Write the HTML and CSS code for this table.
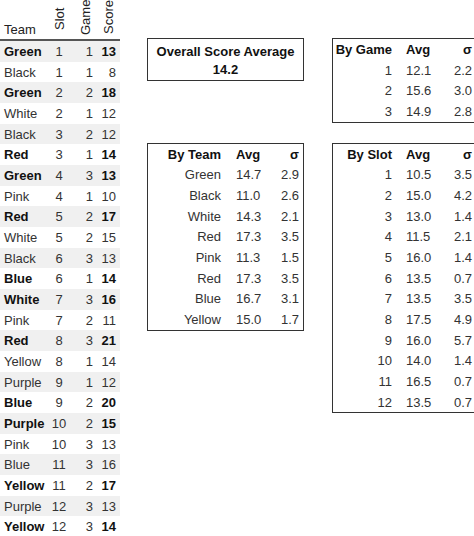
FILE: index.html
```html
<!DOCTYPE html>
<html>
<head>
<meta charset="utf-8">
<link rel="stylesheet" href="styles.css">
</head>
<body>
<div class="page">
  <table class="games">
    <thead>
      <tr>
        <th class="team">Team</th>
        <th class="slot"><span class="vert">Slot</span></th>
        <th class="game"><span class="vert">Game</span></th>
        <th class="score"><span class="vert">Score</span></th>
      </tr>
    </thead>
    <tbody>
      <tr class="win"><td class="team">Green</td><td class="slot">1</td><td class="game">1</td><td class="score">13</td></tr>
      <tr><td class="team">Black</td><td class="slot">1</td><td class="game">1</td><td class="score">8</td></tr>
      <tr class="win"><td class="team">Green</td><td class="slot">2</td><td class="game">2</td><td class="score">18</td></tr>
      <tr><td class="team">White</td><td class="slot">2</td><td class="game">1</td><td class="score">12</td></tr>
      <tr><td class="team">Black</td><td class="slot">3</td><td class="game">2</td><td class="score">12</td></tr>
      <tr class="win"><td class="team">Red</td><td class="slot">3</td><td class="game">1</td><td class="score">14</td></tr>
      <tr class="win"><td class="team">Green</td><td class="slot">4</td><td class="game">3</td><td class="score">13</td></tr>
      <tr><td class="team">Pink</td><td class="slot">4</td><td class="game">1</td><td class="score">10</td></tr>
      <tr class="win"><td class="team">Red</td><td class="slot">5</td><td class="game">2</td><td class="score">17</td></tr>
      <tr><td class="team">White</td><td class="slot">5</td><td class="game">2</td><td class="score">15</td></tr>
      <tr><td class="team">Black</td><td class="slot">6</td><td class="game">3</td><td class="score">13</td></tr>
      <tr class="win"><td class="team">Blue</td><td class="slot">6</td><td class="game">1</td><td class="score">14</td></tr>
      <tr class="win"><td class="team">White</td><td class="slot">7</td><td class="game">3</td><td class="score">16</td></tr>
      <tr><td class="team">Pink</td><td class="slot">7</td><td class="game">2</td><td class="score">11</td></tr>
      <tr class="win"><td class="team">Red</td><td class="slot">8</td><td class="game">3</td><td class="score">21</td></tr>
      <tr><td class="team">Yellow</td><td class="slot">8</td><td class="game">1</td><td class="score">14</td></tr>
      <tr><td class="team">Purple</td><td class="slot">9</td><td class="game">1</td><td class="score">12</td></tr>
      <tr class="win"><td class="team">Blue</td><td class="slot">9</td><td class="game">2</td><td class="score">20</td></tr>
      <tr class="win"><td class="team">Purple</td><td class="slot">10</td><td class="game">2</td><td class="score">15</td></tr>
      <tr><td class="team">Pink</td><td class="slot">10</td><td class="game">3</td><td class="score">13</td></tr>
      <tr><td class="team">Blue</td><td class="slot">11</td><td class="game">3</td><td class="score">16</td></tr>
      <tr class="win"><td class="team">Yellow</td><td class="slot">11</td><td class="game">2</td><td class="score">17</td></tr>
      <tr><td class="team">Purple</td><td class="slot">12</td><td class="game">3</td><td class="score">13</td></tr>
      <tr class="win"><td class="team">Yellow</td><td class="slot">12</td><td class="game">3</td><td class="score">14</td></tr>
    </tbody>
  </table>

  <div class="panels">
    <div class="box overall">
      <div>Overall Score Average</div>
      <div>14.2</div>
    </div>

    <div class="box stat narrow">
      <div class="h c1">By Game</div><div class="h c2">Avg</div><div class="h c3">σ</div>
      <div class="c1">1</div><div class="c2">12.1</div><div class="c3">2.2</div>
      <div class="c1">2</div><div class="c2">15.6</div><div class="c3">3.0</div>
      <div class="c1">3</div><div class="c2">14.9</div><div class="c3">2.8</div>
    </div>

    <div class="box stat wide">
      <div class="h c1">By Team</div><div class="h c2">Avg</div><div class="h c3">σ</div>
      <div class="c1">Green</div><div class="c2">14.7</div><div class="c3">2.9</div>
      <div class="c1">Black</div><div class="c2">11.0</div><div class="c3">2.6</div>
      <div class="c1">White</div><div class="c2">14.3</div><div class="c3">2.1</div>
      <div class="c1">Red</div><div class="c2">17.3</div><div class="c3">3.5</div>
      <div class="c1">Pink</div><div class="c2">11.3</div><div class="c3">1.5</div>
      <div class="c1">Red</div><div class="c2">17.3</div><div class="c3">3.5</div>
      <div class="c1">Blue</div><div class="c2">16.7</div><div class="c3">3.1</div>
      <div class="c1">Yellow</div><div class="c2">15.0</div><div class="c3">1.7</div>
    </div>

    <div class="box stat narrow">
      <div class="h c1">By Slot</div><div class="h c2">Avg</div><div class="h c3">σ</div>
      <div class="c1">1</div><div class="c2">10.5</div><div class="c3">3.5</div>
      <div class="c1">2</div><div class="c2">15.0</div><div class="c3">4.2</div>
      <div class="c1">3</div><div class="c2">13.0</div><div class="c3">1.4</div>
      <div class="c1">4</div><div class="c2">11.5</div><div class="c3">2.1</div>
      <div class="c1">5</div><div class="c2">16.0</div><div class="c3">1.4</div>
      <div class="c1">6</div><div class="c2">13.5</div><div class="c3">0.7</div>
      <div class="c1">7</div><div class="c2">13.5</div><div class="c3">3.5</div>
      <div class="c1">8</div><div class="c2">17.5</div><div class="c3">4.9</div>
      <div class="c1">9</div><div class="c2">16.0</div><div class="c3">5.7</div>
      <div class="c1">10</div><div class="c2">14.0</div><div class="c3">1.4</div>
      <div class="c1">11</div><div class="c2">16.5</div><div class="c3">0.7</div>
      <div class="c1">12</div><div class="c2">13.5</div><div class="c3">0.7</div>
    </div>
  </div>
</div>
</body>
</html>
```

FILE: styles.css
```css
html, body {
  margin: 0;
  padding: 0;
  overflow: hidden;
  background: #fff;
}

body {
  font-family: "Liberation Sans", Arial, sans-serif;
  font-size: 13px;
  color: #333;
}

.page {
  display: flex;
  align-items: flex-start;
  gap: 27px;
}

/* ---------- game list ---------- */
.games {
  flex-shrink: 0;
  width: 120px;
  border-collapse: separate;
  border-spacing: 0;
  table-layout: fixed;
}

.games th,
.games td {
  box-sizing: border-box;
  padding: 0;
  white-space: nowrap;
}

.games th {
  font-weight: normal;
  color: #222;
  vertical-align: bottom;
  padding-bottom: 2px;
  border-bottom: 2px solid #555;
  line-height: 15px;
}

.games td {
  padding-top: 2px;
  line-height: 18.67px;
}

.games .team { width: 50px; text-align: left; padding-left: 4px; }
.games .slot { width: 18px; text-align: center; }
.games .game { width: 29px; text-align: right; padding-right: 4px; }
.games .score { width: 23px; text-align: right; padding-right: 4px; }

.games tbody tr:nth-child(odd) td {
  background: #f0f0f0;
}

.games .win .team,
.games .win .score {
  font-weight: bold;
  color: #111;
}

.vert {
  display: block;
  writing-mode: vertical-rl;
  transform: rotate(180deg);
  height: 37px;
  line-height: 15px;
  width: 15px;
}

.games .slot .vert { margin: 0 auto; }
.games .game .vert,
.games .score .vert { margin-left: auto; }

/* ---------- panels ---------- */
.panels {
  flex-shrink: 0;
  display: grid;
  grid-template-columns: 157px 145px;
  column-gap: 28px;
  row-gap: 20px;
  align-items: start;
  padding-top: 38px;
}

.box {
  border: 1px solid #333;
}

.overall {
  text-align: center;
  font-weight: bold;
  color: #111;
  line-height: 18px;
  padding: 4px 0 1px;
}

.stat {
  display: grid;
}

.stat.wide { grid-template-columns: 75px 40px 40px; }
.stat.narrow { grid-template-columns: 61px 40px 42px; }

.stat > div {
  padding-top: 2px;
  line-height: 18.67px;
  white-space: nowrap;
}

.stat .h {
  font-weight: bold;
  color: #111;
}

.stat .c1 { text-align: right; padding-right: 2px; }
.stat .c2 { text-align: left; padding-left: 13px; }
.stat.narrow .c2 { padding-left: 12px; }
.stat .c3 { text-align: right; padding-right: 4px; }
```
